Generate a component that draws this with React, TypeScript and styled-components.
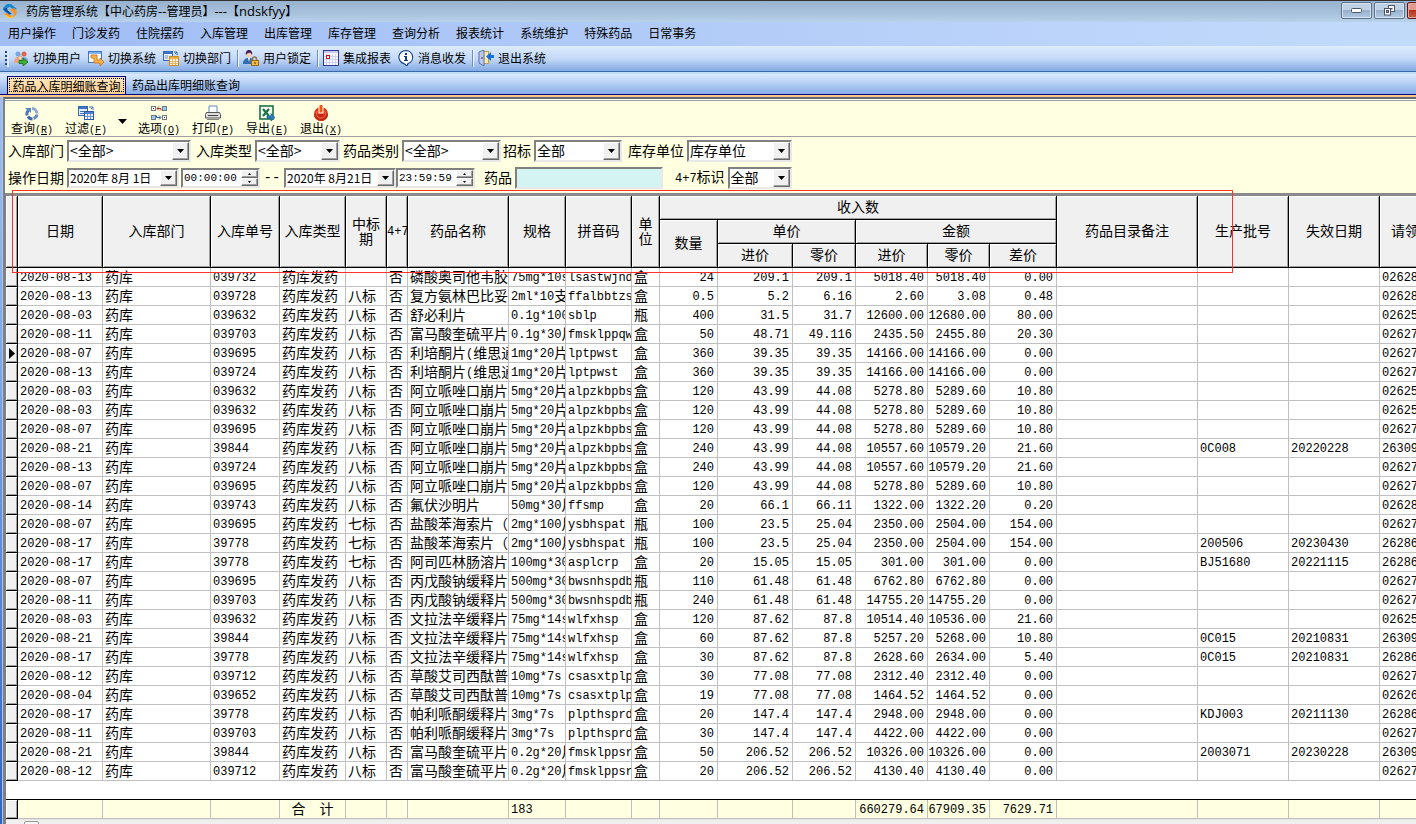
import React from "react";
import styled, { createGlobalStyle, css } from "styled-components";

const UI = `"Noto Sans CJK SC", sans-serif`;
const MONO = `"Liberation Mono", "Noto Sans CJK SC", monospace`;

const GlobalStyle = createGlobalStyle`
  * { box-sizing: border-box; }
  body { margin: 0; background: #fff; color: #000; font: 12px/16px ${UI}; overflow: hidden; }
  button, input, select { font: inherit; color: inherit; margin: 0; }
  svg { flex: none; }
`;

/* ---------- window chrome ---------- */

const Page = styled.div`
  display: flex;
  flex-direction: column;
  min-height: 100vh;
  overflow: hidden;
`;

const TitleBar = styled.header`
  display: flex;
  align-items: center;
  height: 22px;
  padding: 0 0 2px 2px;
  border-top: 1px solid #333;
  background: linear-gradient(#98b2cf, #a9c2dc 60%, #b9d2ec);
`;

const Title = styled.h1`
  flex: 1;
  margin: 0 0 0 8px;
  font-size: 12px;
  font-weight: 400;
  line-height: 18px;
  white-space: pre;
`;

const Latin = styled.span`
  font-family: "Open Sans", sans-serif;
  font-size: 13px;
`;

const WindowButtons = styled.div`
  display: flex;
  gap: 2px;
  align-self: flex-start;
  margin-right: -22px;
  padding-top: 1px;
`;

const WindowButton = styled.button<{ $close?: boolean }>`
  display: flex;
  align-items: center;
  justify-content: center;
  width: 31px;
  height: 17px;
  padding: 0;
  border: 1px solid ${(p) => (p.$close ? "#5a1a22" : "#5f7189")};
  border-radius: 2px;
  box-shadow: inset 0 0 0 1px ${(p) => (p.$close ? "#e2a79f" : "#d5e2f0")};
  background: ${(p) =>
    p.$close
      ? "linear-gradient(#e09c90 48%, #b8341d 50%, #c8604c)"
      : "linear-gradient(#bfd1e4 48%, #97b1cd 50%, #b3cbe4)"};
`;

const MenuBar = styled.nav`
  display: flex;
  height: 24px;
  background: linear-gradient(90deg, #9fbcf5, #bcd4fa 75%, #c2dafa);
`;

const MenuItem = styled.button`
  padding: 0 8px 2px;
  border: 0;
  background: none;
  line-height: 22px;
`;

const ToolBar = styled.div`
  display: flex;
  align-items: center;
  height: 26px;
  padding-left: 5px;
  border-bottom: 1px solid #3b6aa8;
  background: linear-gradient(#ddecfe, #c5daf7 50%, #83aae4);
`;

const ToolButton = styled.button`
  display: flex;
  align-items: center;
  gap: 4px;
  width: 75px;
  height: 24px;
  padding: 0 3px 2px 4px;
  border: 0;
  background: none;
  white-space: nowrap;
`;

const Grip = styled.span`
  width: 4px;
  height: 16px;
  background: repeating-linear-gradient(#27418b 0 2px, transparent 2px 4px);
  border-right: 2px solid #d8e8fd;
`;

const Separator = styled.span`
  width: 2px;
  height: 17px;
  margin-left: 3px;
  background: #6a8ccb;
  border-right: 1px solid #f4f8ff;
`;

const TabStrip = styled.div`
  display: flex;
  align-items: flex-end;
  gap: 2px;
  height: 23px;
  padding-left: 7px;
  border-top: 2px solid #c3dcf8;
  border-bottom: 1px solid #000080;
  background: linear-gradient(#dcebfe, #87aee8);
`;

const Tab = styled.button<{ $active?: boolean }>`
  height: 18px;
  padding: 0 4px;
  border: 0;
  background: none;
  font-size: 12px;
  line-height: 18px;
  ${(p) =>
    p.$active &&
    css`
      border: solid #000080;
      border-width: 1px 1px 0;
      width: 119px;
      line-height: 17px;
      background: linear-gradient(#ffe6bf, #ffcf92);
      outline: 1px dotted #000;
      outline-offset: -3px;
    `}
`;

const Workspace = styled.main`
  display: flex;
  flex: 1;
  min-width: 0;
  border-top: 2px solid #ffc98a;
`;

const WindowEdge = styled.div`
  flex: none;
  width: 3px;
  border-right: 1px solid #a9c4ee;
  background: linear-gradient(#9fbff0, #7ba4e6 40%, #2f63c4);
`;

const Panel = styled.section`
  display: flex;
  flex-direction: column;
  flex: 1;
  min-width: 0;
  border: solid #696969;
  border-width: 2px 0 0 2px;
  border-left-color: #808080;
`;

/* ---------- query tool row and filters ---------- */

const ActionRow = styled.div`
  display: flex;
  height: 38px;
  border-top: 1px solid #fff;
  border-bottom: 1px solid #a0a0a0;
  box-shadow: inset 0 1px #a0a0a0;
  background: #ffffe1;
`;

const ActionButton = styled.button`
  display: flex;
  flex-direction: column;
  align-items: center;
  justify-content: flex-start;
  width: 54px;
  padding: 5px 0 0;
  border: 0;
  background: none;
  line-height: 14px;
  white-space: nowrap;
`;

const Hotkey = styled.span`
  font-family: ${MONO};
  font-size: 10px;
`;

const DropArrow = styled.button`
  width: 19px;
  padding: 2px 0 0;
  border: 0;
  background: none;
`;

const Filters = styled.form`
  display: flex;
  flex-direction: column;
  gap: 5px;
  padding: 3px 0 4px 3px;
  background: #ffffe1;
  font-size: 14px;
`;

const FilterRow = styled.div`
  display: flex;
  align-items: center;
  height: 22px;
`;

const Field = styled.div<{ $gap?: number }>`
  display: flex;
  align-items: center;
  gap: 3px;
  margin-left: ${(p) => p.$gap ?? 0}px;
  white-space: nowrap;
`;

const Label = styled.label`
  padding-bottom: 2px;
`;

const sunken = css`
  border: 2px solid;
  border-color: #808080 #e8e8e8 #e8e8e8 #808080;
  background: #fff;
`;

const Combo = styled.span<{ $width: number; $small?: boolean }>`
  ${sunken}
  display: grid;
  align-items: stretch;
  width: ${(p) => p.$width}px;
  height: ${(p) => (p.$small ? 20 : 22)}px;
  font-size: ${(p) => (p.$small ? 12 : 14)}px;
`;

const Select = styled.select`
  grid-area: 1 / 1;
  width: 100%;
  min-width: 0;
  padding: 0 0 2px 1px;
  border: 0;
  appearance: none;
  background: none;
  line-height: 16px;
`;

const TextBox = styled.input`
  grid-area: 1 / 1;
  width: 100%;
  min-width: 0;
  padding: 0 0 0 1px;
  border: 0;
  background: none;
`;

const raised = css`
  border: 1px solid;
  border-color: #fff #696969 #696969 #fff;
  box-shadow: inset -1px -1px #a0a0a0;
  background: #f0f0f0;
`;

const ArrowFace = styled.span`
  ${raised}
  grid-area: 1 / 1;
  display: flex;
  align-items: center;
  justify-content: center;
  justify-self: end;
  width: 17px;
  pointer-events: none;
`;

const Spinner = styled.span`
  grid-area: 1 / 1;
  justify-self: end;
  display: flex;
  flex-direction: column;
  width: 17px;
`;

const SpinButton = styled.button`
  ${raised}
  display: flex;
  align-items: center;
  justify-content: center;
  flex: 1;
  padding: 0;
`;

const Dashes = styled.span`
  width: 24px;
  text-align: center;
  font-family: ${MONO};
`;

const DrugInput = styled.input`
  ${sunken}
  width: 148px;
  height: 22px;
  background: #d3f4f2;
`;

/* ---------- data grid ---------- */

const GridArea = styled.div`
  position: relative;
  flex: 1;
  border: solid #808080;
  border-width: 3px 0 0 1px;
  border-top-color: #8a8a8a;
  background: #fff;
`;

const GridTable = styled.table`
  width: 1425px;
  table-layout: fixed;
  border-collapse: separate;
  border-spacing: 0;
  font-size: 14px;
`;

const Head = styled.th`
  height: 24px;
  padding: 0 0 2px;
  border: solid #000;
  border-width: 0 1px 1px 0;
  background: #f0f0f0;
  box-shadow: inset 1px 1px #fff, inset -1px -1px #a0a0a0;
  font-weight: 400;
  line-height: 15px;
  overflow: hidden;
  white-space: pre;
`;

const RowHead = styled.th`
  height: 19px;
  padding: 0;
  border: solid #000;
  border-width: 0 1px 1px 0;
  background: #f0f0f0;
  box-shadow: inset 1px 1px #fff, inset -1px -1px #a0a0a0;
  line-height: 0;
`;

const Cell = styled.td<{ $total?: boolean }>`
  height: 19px;
  padding: 0;
  border: solid #c0c0c0;
  border-width: 0 1px 1px 0;
  background: ${(p) => (p.$total ? "#ffffe1" : "#fff")};
`;

const CellText = styled.div<{ $align: string }>`
  display: flex;
  justify-content: ${(p) => p.$align};
  height: 18px;
  padding: 0 ${(p) => (p.$align === "flex-end" ? 3 : 0)}px 0 ${(p) => (p.$align === "flex-start" ? 2 : 0)}px;
  line-height: 16px;
  overflow: hidden;
  white-space: pre;
`;

const Half = styled.span`
  font-family: ${MONO};
  font-size: 12px;
  ${CellText} > & {
    line-height: 20px;
  }
`;

const SpacerCell = styled.td`
  height: 19px;
  padding: 0;
  border-bottom: 1px solid #000;
`;

const ScrollBar = styled.div`
  display: flex;
  height: 17px;
  margin-bottom: -12px;
  padding: 1px 0 0 18px;
  border-top: 1px solid #e3e3e3;
  background: #f0f0f0;
`;

const ScrollThumb = styled.span`
  width: 15px;
  border: 1px solid #979797;
  border-radius: 2px;
  background: #f7f7f7;
`;

const Marquee = styled.div`
  position: absolute;
  top: -6px;
  left: 6px;
  width: 1221px;
  height: 83px;
  border: 1px solid #ff3030;
  pointer-events: none;
`;

/* ---------- icons ---------- */

const Icon = ({ children }: { children: React.ReactNode }) => (
  <svg width="16" height="16" viewBox="0 0 16 16" fill="none" aria-hidden="true">
    {children}
  </svg>
);

const Caret = ({ w = 7, h = 4 }: { w?: number; h?: number }) => (
  <svg width={w} height={h} viewBox="0 0 7 4" preserveAspectRatio="none" aria-hidden="true">
    <path d="M0 0h7L3.500 4z" fill="#000" />
  </svg>
);

const LogoIcon = () => (
  <Icon>
    <path d="M1 5L5 1l4 0 6 5-3 1-4-3-3 1 1 3 4 3-3 1-5-4z" fill="#1686cf" />
    <path d="M1 6l6 5 3 0-5-4 0-2z" fill="#0a4f9c" />
    <path d="M12 5l3 3-1 4-4 3-4-1-4-3 3-1 4 3 3-1-1-3-3-2z" fill="#f7941d" />
    <path d="M2 11l4 4 4 0 1-2-3 1z" fill="#ffc83c" />
  </Icon>
);

const UsersIcon = () => (
  <Icon>
    <circle cx="5" cy="4" r="2.500" fill="#78a8dc" />
    <circle cx="11" cy="4" r="2.500" fill="#e0644c" />
    <path d="M1 13c0-5 2-6 4-6s4 1 4 6z" fill="#eda38a" />
    <path d="M7 12c0-4 2-5 4-5s4 1 4 4z" fill="#7ba7d8" />
    <circle cx="7" cy="8" r="2" fill="#ffe1c0" stroke="#b48060" strokeWidth=".6" />
    <path d="M6 10.500h4V8l5 4-5 4v-2.500H6z" fill="#3fae3a" stroke="#146c17" strokeWidth=".8" />
  </Icon>
);

const SystemIcon = () => (
  <Icon>
    <rect x="0.500" y="1.500" width="13" height="11" fill="#f5faff" stroke="#3c78c4" />
    <path d="M1 2h12v2H1z" fill="#7fb2ea" />
    <path d="M3 5h6v5h3V8l4 4-4 4v-3H6V8H3z" fill="#ffb545" stroke="#c8690c" strokeWidth=".8" />
  </Icon>
);

const DeptIcon = () => (
  <Icon>
    <rect x="0.500" y="1.500" width="9" height="9" fill="#e6f0fd" stroke="#3767b5" />
    <path d="M1 2h8v2H1z" fill="#3d74c8" />
    <path d="M2 6h3M2 8h3" stroke="#6d95d3" />
    <path d="M11 2h3v3M12 4l2-2" stroke="#3767b5" />
    <rect x="6.500" y="6.500" width="9" height="9" fill="#fff7df" stroke="#d08a1e" />
    <path d="M7 7h8v2H7z" fill="#f2ac3b" />
    <path d="M7 11.500h8M7 13.500h8M9.500 9v6M12.500 9v6" stroke="#e2b568" />
  </Icon>
);

const LockIcon = () => (
  <Icon>
    <circle cx="6" cy="4" r="3" fill="#f4cfae" />
    <path d="M3 5c-1-3 1-5 3-5s4 2 3 5C8 2 5 2 3 5z" fill="#4a2160" />
    <path d="M0 14c0-5 3-6 6-6s5 1 5 6z" fill="#2f6db4" />
    <path d="M5 8h2l-1 4z" fill="#fff" />
    <path d="M9.500 10V9a2 2 0 014 0v1" stroke="#8a7440" strokeWidth="1.400" />
    <rect x="8.500" y="10.500" width="7" height="5" fill="#eeb84c" stroke="#a26c17" />
    <path d="M12 12v2" stroke="#5a3b08" />
  </Icon>
);

const ReportIcon = () => (
  <Icon>
    <rect x="0.500" y="0.500" width="15" height="15" fill="#fbfbff" stroke="#34389a" />
    <path d="M1 1h14v2H1z" fill="#c9c6ef" />
    <path d="M3.500 4v11M6.500 4v11M9.500 4v11M12.500 4v11M1 6.500h14M1 9.500h14M1 12.500h14" stroke="#cfd3f1" />
    <rect x="3.500" y="5.500" width="3" height="3" fill="#fff" stroke="#c3161c" />
  </Icon>
);

const MessageIcon = () => (
  <Icon>
    <path d="M8 .6a6.600 6.600 0 012 12.900L9 16l-3-2.400A6.600 6.600 0 018 .6z" fill="#fff" stroke="#153e86" strokeWidth="1.100" />
    <path d="M7 3h2v2H7zM6 6h3v4h1v1H6v-1h1V7H6z" fill="#0c3b94" />
  </Icon>
);

const DoorIcon = () => (
  <Icon>
    <rect x="5.500" y="1.500" width="5" height="12" fill="#ffe9a8" stroke="#c4a042" />
    <path d="M1 2l5-2v16l-5-3z" fill="#b8cbed" stroke="#5a6daa" />
    <path d="M4 7v2" stroke="#334" />
    <path d="M16 5h-3V2L8 6.500 13 11V8h3z" fill="#1473d8" />
  </Icon>
);

const RefreshIcon = () => (
  <Icon>
    <path d="M8 3.500a5.200 5.200 0 015 5" stroke="#8ea9d2" strokeWidth="3" />
    <path d="M13 9.500a5.200 5.200 0 01-3.500 4" stroke="#6b8cc2" strokeWidth="3" />
    <path d="M8.500 14a5.200 5.200 0 01-4.500-2.500" stroke="#3c66ab" strokeWidth="3" />
    <path d="M3.200 10.500a5 5 0 011-5" stroke="#4a78bd" strokeWidth="3" />
    <path d="M1 3h6v5z" fill="#5b84c4" />
  </Icon>
);

const FilterIcon = () => (
  <Icon>
    <rect x="0.500" y="1.500" width="9" height="9" fill="#e6f0fd" stroke="#3767b5" />
    <path d="M1 2h8v2H1z" fill="#3d74c8" />
    <path d="M2 6.500h4M2 8.500h4M11 2h4v3M13 4l2-2" stroke="#4672b8" />
    <rect x="6.500" y="6.500" width="9" height="8" fill="#edf4ff" stroke="#2c59a7" />
    <path d="M7 7h8v2H7z" fill="#4f83d0" />
    <path d="M7 11.500h8M9.500 9v5M12.500 9v5" stroke="#6f96d4" />
  </Icon>
);

const OptionsIcon = () => (
  <Icon>
    <rect x="0.500" y="1.500" width="4" height="4" fill="#fff" stroke="#777" />
    <rect x="11.500" y="1.500" width="4" height="4" fill="#8cd0ff" stroke="#777" />
    <rect x="0.500" y="10.500" width="4" height="4" fill="#8cd0ff" stroke="#777" />
    <rect x="11.500" y="10.500" width="4" height="4" fill="#fff" stroke="#777" />
    <path d="M2 3h1v1H2zM13 12h1v1h-1z" fill="#333" />
    <path d="M10 5.500V3.500H6M8 1.500l-2 2 2 2" stroke="#b5391b" />
    <path d="M5.500 10.500v2h4M8 10.500l2 2-2 2" stroke="#1e62a8" />
  </Icon>
);

const PrintIcon = () => (
  <Icon>
    <path d="M4 1h8v7H4z" fill="#fff" stroke="#6487b8" />
    <path d="M1.500 7.500h13l1 2v3.500H.5V9.500z" fill="#dedede" stroke="#555" />
    <path d="M3 10.500h10" stroke="#444" />
    <path d="M2 14.500h12" stroke="#888" />
  </Icon>
);

const ExcelIcon = () => (
  <Icon>
    <rect x="1" y="1" width="13" height="13" fill="#f2faf2" stroke="#1e7145" strokeWidth="1.600" />
    <path d="M4 4l6 7M10 4l-6 7" stroke="#1e7145" strokeWidth="2.200" />
    <path d="M8 11h4V8.500l4 4-4 3.500v-2.500H8z" fill="#2a7fc0" stroke="#0f4f86" strokeWidth=".6" />
  </Icon>
);

const PowerIcon = () => (
  <Icon>
    <circle cx="8" cy="9" r="7" fill="#dd3318" />
    <path d="M1 9a7 7 0 0014 0z" fill="#c9260f" />
    <path d="M5 5.500a4.400 4.400 0 106 0" stroke="#e8755c" strokeWidth="1" />
    <rect x="6" y="-1" width="4" height="9" fill="#e8571c" stroke="#ffffe1" strokeWidth="1" />
  </Icon>
);

/* ---------- data ---------- */

const MENUS = ["用户操作", "门诊发药", "住院摆药", "入库管理", "出库管理", "库存管理", "查询分析", "报表统计", "系统维护", "特殊药品", "日常事务"];

const COLUMN_WIDTHS = [12, 85, 108, 69, 66, 41, 21, 101, 57, 66, 28, 58, 75, 63, 72, 62, 67, 141, 91, 91, 51];

const DRUGS: Record<string, [string, string, string, string]> = {
  lin: ["磷酸奥司他韦胶", "75mg*10s", "lsastwjnd", "盒"],
  fu: ["复方氨林巴比妥", "2ml*10支", "ffalbbtzs", "盒"],
  shu: ["舒必利片", "0.1g*100", "sblp", "瓶"],
  fm1: ["富马酸奎硫平片", "0.1g*30片", "fmsklppqw", "盒"],
  li: ["利培酮片(维思通", "1mg*20片", "lptpwst", "盒"],
  ali: ["阿立哌唑口崩片", "5mg*20片", "alpzkbpbs", "盒"],
  ff: ["氟伏沙明片", "50mg*30片", "ffsmp", "盒"],
  yan: ["盐酸苯海索片（", "2mg*100片", "ysbhspat", "瓶"],
  asp: ["阿司匹林肠溶片", "100mg*30", "asplcrp", "盒"],
  bw: ["丙戊酸钠缓释片", "500mg*30", "bwsnhspdb", "瓶"],
  wl: ["文拉法辛缓释片", "75mg*14s", "wlfxhsp", "盒"],
  cs: ["草酸艾司西酞普", "10mg*7s", "csasxtplp", "盒"],
  pl: ["帕利哌酮缓释片", "3mg*7s", "plpthsprd", "盒"],
  fm2: ["富马酸奎硫平片", "0.2g*20片", "fmsklppsr", "盒"],
};

/* date | order | bid period | drug | qty | cost | retail | cost sum | retail sum | margin | batch | expiry | request */
const RECORDS = `
2020-08-13|039732||lin|24|209.1|209.1|5018.40|5018.40|0.00|||02628
2020-08-13|039728|八标|fu|0.5|5.2|6.16|2.60|3.08|0.48|||02628
2020-08-03|039632|八标|shu|400|31.5|31.7|12600.00|12680.00|80.00|||02625
2020-08-11|039703|八标|fm1|50|48.71|49.116|2435.50|2455.80|20.30|||02627
2020-08-07|039695|八标|li|360|39.35|39.35|14166.00|14166.00|0.00|||02627
2020-08-13|039724|八标|li|360|39.35|39.35|14166.00|14166.00|0.00|||02627
2020-08-03|039632|八标|ali|120|43.99|44.08|5278.80|5289.60|10.80|||02625
2020-08-03|039632|八标|ali|120|43.99|44.08|5278.80|5289.60|10.80|||02625
2020-08-07|039695|八标|ali|120|43.99|44.08|5278.80|5289.60|10.80|||02627
2020-08-21|39844|八标|ali|240|43.99|44.08|10557.60|10579.20|21.60|0C008|20220228|26309
2020-08-13|039724|八标|ali|240|43.99|44.08|10557.60|10579.20|21.60|||02627
2020-08-07|039695|八标|ali|120|43.99|44.08|5278.80|5289.60|10.80|||02627
2020-08-14|039743|八标|ff|20|66.1|66.11|1322.00|1322.20|0.20|||02628
2020-08-07|039695|七标|yan|100|23.5|25.04|2350.00|2504.00|154.00|||02627
2020-08-17|39778|七标|yan|100|23.5|25.04|2350.00|2504.00|154.00|200506|20230430|26286
2020-08-17|39778|七标|asp|20|15.05|15.05|301.00|301.00|0.00|BJ51680|20221115|26286
2020-08-07|039695|八标|bw|110|61.48|61.48|6762.80|6762.80|0.00|||02627
2020-08-11|039703|八标|bw|240|61.48|61.48|14755.20|14755.20|0.00|||02627
2020-08-03|039632|八标|wl|120|87.62|87.8|10514.40|10536.00|21.60|||02625
2020-08-21|39844|八标|wl|60|87.62|87.8|5257.20|5268.00|10.80|0C015|20210831|26309
2020-08-17|39778|八标|wl|30|87.62|87.8|2628.60|2634.00|5.40|0C015|20210831|26286
2020-08-12|039712|八标|cs|30|77.08|77.08|2312.40|2312.40|0.00|||02627
2020-08-04|039652|八标|cs|19|77.08|77.08|1464.52|1464.52|0.00|||02626
2020-08-17|39778|八标|pl|20|147.4|147.4|2948.00|2948.00|0.00|KDJ003|20211130|26286
2020-08-11|039703|八标|pl|30|147.4|147.4|4422.00|4422.00|0.00|||02627
2020-08-21|39844|八标|fm2|50|206.52|206.52|10326.00|10326.00|0.00|2003071|20230228|26309
2020-08-12|039712|八标|fm2|20|206.52|206.52|4130.40|4130.40|0.00|||02627`
  .trim()
  .split("\n")
  .map((line) => {
    const [date, order, bid, drug, ...rest] = line.split("|");
    const [qty, cost, retail, costSum, retailSum, margin, batch, expiry, request] = rest;
    return [date, "药库", order, "药库发药", bid, "否", ...DRUGS[drug], qty, cost, retail, costSum, retailSum, margin, "", batch, expiry, request];
  });

const TOTALS = ["", "", "", "合　计", "", "", "", "183", "", "", "", "", "", "660279.64", "667909.35", "7629.71", "", "", "", ""];

const CURRENT_ROW = 4;

/* Full-width and half-width runs keep the 2:1 ratio of a terminal face. */
const Mixed = ({ text }: { text: string }) => (
  <>
    {text.split(/([\x20-\x7e]+)/).map((run, i) => (run ? i % 2 ? <Half key={i}>{run}</Half> : <span key={i}>{run}</span> : null))}
  </>
);

const alignOf = (col: number, total?: boolean) => {
  if (total && col === 3) return "center";
  return col >= 10 && col <= 15 ? "flex-end" : "flex-start";
};

const Cells = ({ values, total }: { values: string[]; total?: boolean }) => (
  <>
    {values.map((value, col) => (
      <Cell key={col} $total={total}>
        <CellText $align={alignOf(col, total)}>
          <Mixed text={value} />
        </CellText>
      </Cell>
    ))}
  </>
);

const DataGrid = () => (
  <GridTable>
    <colgroup>
      {COLUMN_WIDTHS.map((width, i) => (
        <col key={i} width={width} />
      ))}
    </colgroup>
    <thead>
      <tr>
        <Head rowSpan={3} />
        <Head rowSpan={3}>日期</Head>
        <Head rowSpan={3}>入库部门</Head>
        <Head rowSpan={3}>入库单号</Head>
        <Head rowSpan={3}>入库类型</Head>
        <Head rowSpan={3}>{"中标\n期"}</Head>
        <Head rowSpan={3}><Half>4+7</Half></Head>
        <Head rowSpan={3}>药品名称</Head>
        <Head rowSpan={3}>规格</Head>
        <Head rowSpan={3}>拼音码</Head>
        <Head rowSpan={3}>{"单\n位"}</Head>
        <Head colSpan={6}>收入数</Head>
        <Head rowSpan={3}>药品目录备注</Head>
        <Head rowSpan={3}>生产批号</Head>
        <Head rowSpan={3}>失效日期</Head>
        <Head rowSpan={3}>请领</Head>
      </tr>
      <tr>
        <Head rowSpan={2}>数量</Head>
        <Head colSpan={2}>单价</Head>
        <Head colSpan={3}>金额</Head>
      </tr>
      <tr>
        <Head>进价</Head>
        <Head>零价</Head>
        <Head>进价</Head>
        <Head>零价</Head>
        <Head>差价</Head>
      </tr>
    </thead>
    <tbody>
      {RECORDS.map((row, i) => (
        <tr key={i}>
          <RowHead scope="row">
            {i === CURRENT_ROW && (
              <svg width="7" height="11" viewBox="0 0 7 11" aria-hidden="true">
                <path d="M1 0l6 5.500L1 11z" fill="#000" />
              </svg>
            )}
          </RowHead>
          <Cells values={row} />
        </tr>
      ))}
    </tbody>
    <tfoot>
      <tr>
        <SpacerCell colSpan={21} />
      </tr>
      <tr>
        <RowHead scope="row" />
        <Cells values={TOTALS} total />
      </tr>
    </tfoot>
  </GridTable>
);

/* ---------- form pieces ---------- */

type ComboFieldProps = { id: string; label: string; value: string; width: number; gap?: number };

const ComboField = ({ id, label, value, width, gap }: ComboFieldProps) => (
  <Field $gap={gap}>
    <Label htmlFor={id}>
      <Mixed text={label} />
    </Label>
    <Combo $width={width}>
      <Select id={id} defaultValue={value}>
        <option>{value}</option>
      </Select>
      <ArrowFace>
        <Caret />
      </ArrowFace>
    </Combo>
  </Field>
);

const DateBox = ({ id, value, label }: { id: string; value: string; label?: string }) => (
  <Combo $width={112} $small>
    <TextBox id={id} defaultValue={value} aria-label={label} />
    <ArrowFace>
      <Caret />
    </ArrowFace>
  </Combo>
);

const TimeText = styled(TextBox)`
  font-family: ${MONO};
  font-size: 11px;
`;

const TimeBox = ({ value, label }: { value: string; label: string }) => (
  <Combo $width={79} $small>
    <TimeText defaultValue={value} aria-label={label} />
    <Spinner>
      <SpinButton type="button" aria-label="增加">
        <svg width="3" height="2" viewBox="0 0 3 2"><path d="M0 2h3L1.500 0z" fill="#000" /></svg>
      </SpinButton>
      <SpinButton type="button" aria-label="减少">
        <svg width="3" height="2" viewBox="0 0 3 2"><path d="M0 0h3L1.500 2z" fill="#000" /></svg>
      </SpinButton>
    </Spinner>
  </Combo>
);

const Action = ({ icon, label, hotkey }: { icon: React.ReactNode; label: string; hotkey: string }) => (
  <ActionButton>
    {icon}
    <span>
      {label}
      <Hotkey>
        (<u>{hotkey}</u>)
      </Hotkey>
    </span>
  </ActionButton>
);

export default function App() {
  return (
    <Page>
      <GlobalStyle />
      <TitleBar>
        <LogoIcon />
        <Title>
          药房管理系统【中心药房<Latin>--</Latin>管理员】<Latin>---</Latin>【<Latin>ndskfyy</Latin>】
        </Title>
        <WindowButtons>
          <WindowButton aria-label="最小化">
            <svg width="11" height="5" viewBox="0 0 11 5"><rect x="0.500" y="0.500" width="10" height="4" rx="1" fill="#fff" stroke="#4c5566" /></svg>
          </WindowButton>
          <WindowButton aria-label="还原">
            <svg width="13" height="11" viewBox="0 0 13 11">
              <rect x="5.500" y="0.500" width="6" height="6" fill="#fff" stroke="#4c5566" />
              <rect x="8" y="3" width="1.500" height="1.500" fill="#4c5566" />
              <rect x="1.500" y="3.500" width="6" height="6.500" fill="#fff" stroke="#4c5566" />
              <rect x="3.500" y="5.500" width="2" height="2" fill="#8fa8c4" stroke="#4c5566" />
            </svg>
          </WindowButton>
          <WindowButton $close aria-label="关闭" />
        </WindowButtons>
      </TitleBar>
      <MenuBar>
        {MENUS.map((menu) => (
          <MenuItem key={menu}>{menu}</MenuItem>
        ))}
      </MenuBar>
      <ToolBar>
        <Grip />
        <ToolButton><UsersIcon />切换用户</ToolButton>
        <ToolButton><SystemIcon />切换系统</ToolButton>
        <ToolButton><DeptIcon />切换部门</ToolButton>
        <Separator />
        <ToolButton><LockIcon />用户锁定</ToolButton>
        <Separator />
        <ToolButton><ReportIcon />集成报表</ToolButton>
        <ToolButton><MessageIcon />消息收发</ToolButton>
        <Separator />
        <ToolButton><DoorIcon />退出系统</ToolButton>
      </ToolBar>
      <TabStrip role="tablist">
        <Tab role="tab" aria-selected="true" $active>药品入库明细账查询</Tab>
        <Tab role="tab" aria-selected="false">药品出库明细账查询</Tab>
      </TabStrip>
      <Workspace>
        <WindowEdge />
        <Panel>
          <ActionRow>
            <Action icon={<RefreshIcon />} label="查询" hotkey="R" />
            <Action icon={<FilterIcon />} label="过滤" hotkey="F" />
            <DropArrow aria-label="更多过滤"><Caret w={9} h={5} /></DropArrow>
            <Action icon={<OptionsIcon />} label="选项" hotkey="O" />
            <Action icon={<PrintIcon />} label="打印" hotkey="P" />
            <Action icon={<ExcelIcon />} label="导出" hotkey="E" />
            <Action icon={<PowerIcon />} label="退出" hotkey="X" />
          </ActionRow>
          <Filters>
            <FilterRow>
              <ComboField id="dept" label="入库部门" value="<全部>" width={124} />
              <ComboField id="type" label="入库类型" value="<全部>" width={85} gap={5} />
              <ComboField id="category" label="药品类别" value="<全部>" width={99} gap={3} />
              <ComboField id="bid" label="招标" value="全部" width={88} gap={2} />
              <ComboField id="unit" label="库存单位" value="库存单位" width={105} gap={6} />
            </FilterRow>
            <FilterRow>
              <Field>
                <Label htmlFor="from">操作日期</Label>
                <DateBox id="from" value="2020年 8月 1日" />
              </Field>
              <Field $gap={2}>
                <TimeBox value="00:00:00" label="开始时间" />
              </Field>
              <Dashes>--</Dashes>
              <Field>
                <DateBox id="to" value="2020年 8月21日" label="结束日期" />
              </Field>
              <Field>
                <TimeBox value="23:59:59" label="结束时间" />
              </Field>
              <Field $gap={9}>
                <Label htmlFor="drug">药品</Label>
                <DrugInput id="drug" />
              </Field>
              <ComboField id="flag" label="4+7标识" value="全部" width={64} gap={12} />
            </FilterRow>
          </Filters>
          <GridArea>
            <DataGrid />
            <ScrollBar>
              <ScrollThumb />
            </ScrollBar>
            <Marquee />
          </GridArea>
        </Panel>
      </Workspace>
    </Page>
  );
}
